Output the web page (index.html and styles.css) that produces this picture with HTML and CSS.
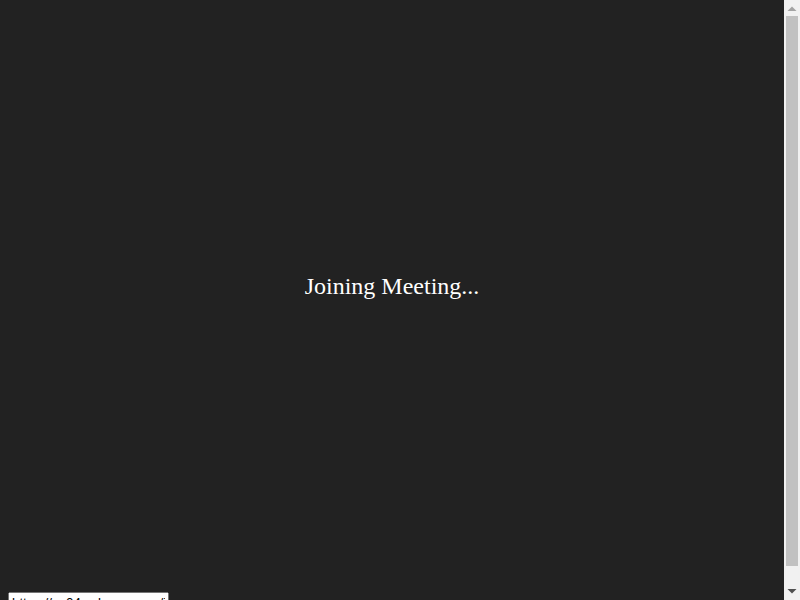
FILE: index.html
```html
<!DOCTYPE html>
<html>
<head>
<meta charset="utf-8">
<link rel="stylesheet" href="styles.css">
</head>
<body>
<div class="stage"><div class="msg">Joining Meeting...</div></div>
<input class="link" type="text" value="https://us04web.zoom.us/j/" readonly>
<div class="scrollbar" aria-hidden="true">
  <div class="sb-btn"><svg width="16" height="16" viewBox="0 0 16 16"><polygon points="3.5,11 8,6.5 12.5,11" fill="#a3a3a3"/></svg></div>
  <div class="sb-track"><div class="sb-thumb"></div></div>
  <div class="sb-btn"><svg width="16" height="16" viewBox="0 0 16 16"><polygon points="3.5,5 12.5,5 8,9.5" fill="#505050"/></svg></div>
</div>
</body>
</html>
```
FILE: styles.css
```css
html {
  background: #222222;
}
body {
  margin: 8px 24px 8px 8px;
  background: #222222;
  font-family: "Liberation Serif", "Times New Roman", serif;
}
.stage {
  height: 556px;
  padding-bottom: 28px;
  display: flex;
  align-items: center;
  justify-content: center;
}
.msg {
  color: #ffffff;
  font-size: 24px;
}
.link {
  display: block;
  font-family: "Liberation Sans", Arial, sans-serif;
  font-size: 13.33px;
  width: 153px;
}
.scrollbar {
  position: fixed;
  top: 0;
  right: 0;
  width: 16px;
  height: 100vh;
  background: #f1f1f1;
  display: flex;
  flex-direction: column;
}
.sb-btn {
  height: 16px;
  flex: none;
}
.sb-btn svg {
  display: block;
}
.sb-track {
  flex: 1;
  padding: 0 2px;
}
.sb-thumb {
  height: 550px;
  background: #c1c1c1;
}
```
